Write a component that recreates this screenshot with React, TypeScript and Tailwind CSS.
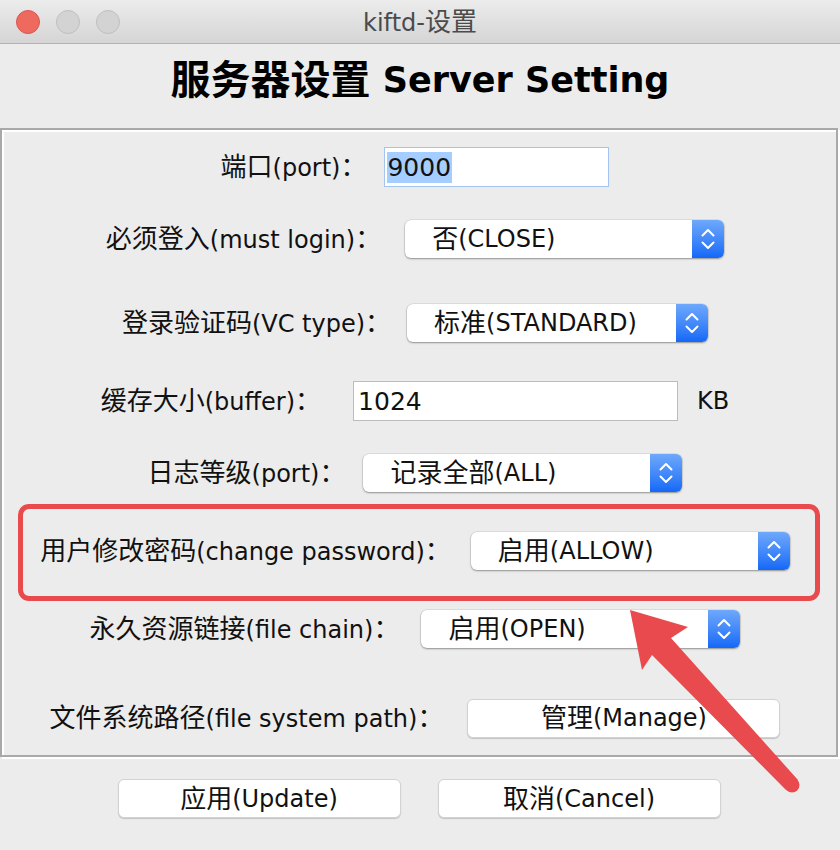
import type { ReactNode } from "react"

const font = "font-['DejaVu_Sans','Noto_Sans_CJK_SC',sans-serif]"

function Label({ cn, en }: { cn: string; en: string }) {
    return (
        <span className="whitespace-nowrap text-[#111] leading-none">
            <span className="text-[26px]">{cn}</span>
            <span className="text-[24px]">{en}</span>
            <span className="text-[26px]">：</span>
        </span>
    )
}

function Chevrons() {
    return (
        <svg width="14" height="22" viewBox="0 0 14 22" fill="none" stroke="white" strokeWidth="2" strokeLinecap="round" strokeLinejoin="round">
            <path d="M1.5 7.5 L7 2 L12.5 7.5" />
            <path d="M1.5 14.5 L7 20 L12.5 14.5" />
        </svg>
    )
}

function Select({ cn, en, w = "w-[319px]" }: { cn: string; en: string; w?: string }) {
    return (
        <div className={`${w} h-[38px] rounded-[6px] bg-white flex overflow-hidden shadow-[0_1px_2px_rgba(0,0,0,0.35),0_0_0_0.5px_rgba(0,0,0,0.12)]`}>
            <div className="flex-1 flex items-center pl-[27px] leading-none text-[#111] whitespace-nowrap">
                <span className="text-[26px]">{cn}</span>
                <span className="text-[24px]">{en}</span>
            </div>
            <div className="w-[32px] flex items-center justify-center bg-gradient-to-b from-[#6ea8fb] to-[#1268f7]">
                <Chevrons />
            </div>
        </div>
    )
}

function Button({ children, w }: { children: ReactNode; w: string }) {
    return (
        <div className={`${w} h-[39px] rounded-[6px] bg-white border border-[#d2d2d2] shadow-[0_1px_1px_rgba(0,0,0,0.18)] flex items-center justify-center leading-none text-[#111] whitespace-nowrap`}>
            {children}
        </div>
    )
}

export default function App() {
    return (
        <div className={`${font} relative w-[840px] h-[850px] bg-[#ececec] overflow-hidden`}>
            {/* title bar */}
            <div className="relative h-[44px] border-b border-[#b3b3b3] bg-gradient-to-b from-[#ececec] to-[#d5d5d5] flex items-center justify-center">
                <div className="absolute left-[16px] top-[10px] flex gap-[16px]">
                    <div className="w-[24px] h-[24px] rounded-full bg-[#ee6a5f] border border-[#d9574e]" />
                    <div className="w-[24px] h-[24px] rounded-full bg-[#d3d3d3] border border-[#bfbfbf]" />
                    <div className="w-[24px] h-[24px] rounded-full bg-[#d3d3d3] border border-[#bfbfbf]" />
                </div>
                <span className="text-[#4b4b4b] leading-none">
                    <span className="text-[24px]">kiftd-</span>
                    <span className="text-[26px]">设置</span>
                </span>
            </div>

            {/* heading */}
            <div className="h-[84px] flex items-center justify-center pb-[12px] font-bold text-black leading-none">
                <span className="text-[40px]">服务器设置</span>
                <span className="text-[35px]">&nbsp;Server Setting</span>
            </div>

            {/* settings panel */}
            <div className="w-[838px] border-2 border-[#a9a9a9] shadow-[inset_2px_2px_0_#fff,2px_2px_0_#fff] pr-[8px] pb-[17px] pt-[17px] flex flex-col">
                <div className="h-[40px] flex items-center justify-center">
                    <Label cn="端口" en="(port)" />
                    <div className="ml-[18px] w-[225px] h-[40px] bg-white border border-[#a4c4ef] flex items-center pl-[2px]">
                        <span className="bg-[#a6cdff] text-[25px] leading-[31px] text-[#111] pr-[1px]">9000</span>
                    </div>
                </div>

                <div className="mt-[32px] h-[40px] flex items-center justify-center">
                    <Label cn="必须登入" en="(must login)" />
                    <div className="ml-[24px]">
                        <Select cn="否" en="(CLOSE)" />
                    </div>
                </div>

                <div className="mt-[44px] h-[40px] flex items-center justify-center">
                    <Label cn="登录验证码" en="(VC type)" />
                    <div className="ml-[16px]">
                        <Select cn="标准" en="(STANDARD)" w="w-[301px]" />
                    </div>
                </div>

                <div className="mt-[38px] h-[40px] flex items-center justify-center">
                    <Label cn="缓存大小" en="(buffer)" />
                    <div className="ml-[32px] w-[325px] h-[40px] bg-white border border-[#bcbcbc] flex items-center pl-[4px]">
                        <span className="text-[25px] leading-none text-[#111]">1024</span>
                    </div>
                    <span className="ml-[19px] text-[24px] leading-none text-[#111]">KB</span>
                </div>

                <div className="mt-[32px] h-[40px] flex items-center justify-center">
                    <Label cn="日志等级" en="(port)" />
                    <div className="ml-[18px]">
                        <Select cn="记录全部" en="(ALL)" />
                    </div>
                </div>

                <div className="relative mt-[38px] h-[40px] flex items-center justify-center">
                    <div className="absolute left-[16px] top-[-27px] w-[802px] h-[97px] rounded-[11px] border-[5px] border-[#e94a4d]" />
                    <Label cn="用户修改密码" en="(change password)" />
                    <div className="ml-[20px]">
                        <Select cn="启用" en="(ALLOW)" />
                    </div>
                </div>

                <div className="mt-[38px] h-[40px] flex items-center justify-center">
                    <Label cn="永久资源链接" en="(file chain)" />
                    <div className="ml-[22px]">
                        <Select cn="启用" en="(OPEN)" />
                    </div>
                </div>

                <div className="mt-[49px] h-[40px] flex items-center justify-center">
                    <Label cn="文件系统路径" en="(file system path)" />
                    <div className="ml-[24px]">
                        <Button w="w-[313px]">
                            <span className="text-[26px]">管理</span>
                            <span className="text-[24px]">(Manage)</span>
                        </Button>
                    </div>
                </div>
            </div>

            {/* dialog buttons */}
            <div className="mt-[22px] flex justify-center gap-[37px] pr-[2px]">
                <Button w="w-[283px]">
                    <span className="text-[26px]">应用</span>
                    <span className="text-[24px]">(Update)</span>
                </Button>
                <Button w="w-[283px]">
                    <span className="text-[26px]">取消</span>
                    <span className="text-[24px]">(Cancel)</span>
                </Button>
            </div>

            {/* annotation arrow */}
            <svg className="absolute left-0 top-0 pointer-events-none" width="840" height="850" viewBox="0 0 840 850">
                <polygon fill="#e94a4d" points="630,610 688,627 671,638 798,780 786,790 652,655 642,670" />
                <circle cx="792" cy="785" r="7.5" fill="#e94a4d" />
            </svg>
        </div>
    )
}
